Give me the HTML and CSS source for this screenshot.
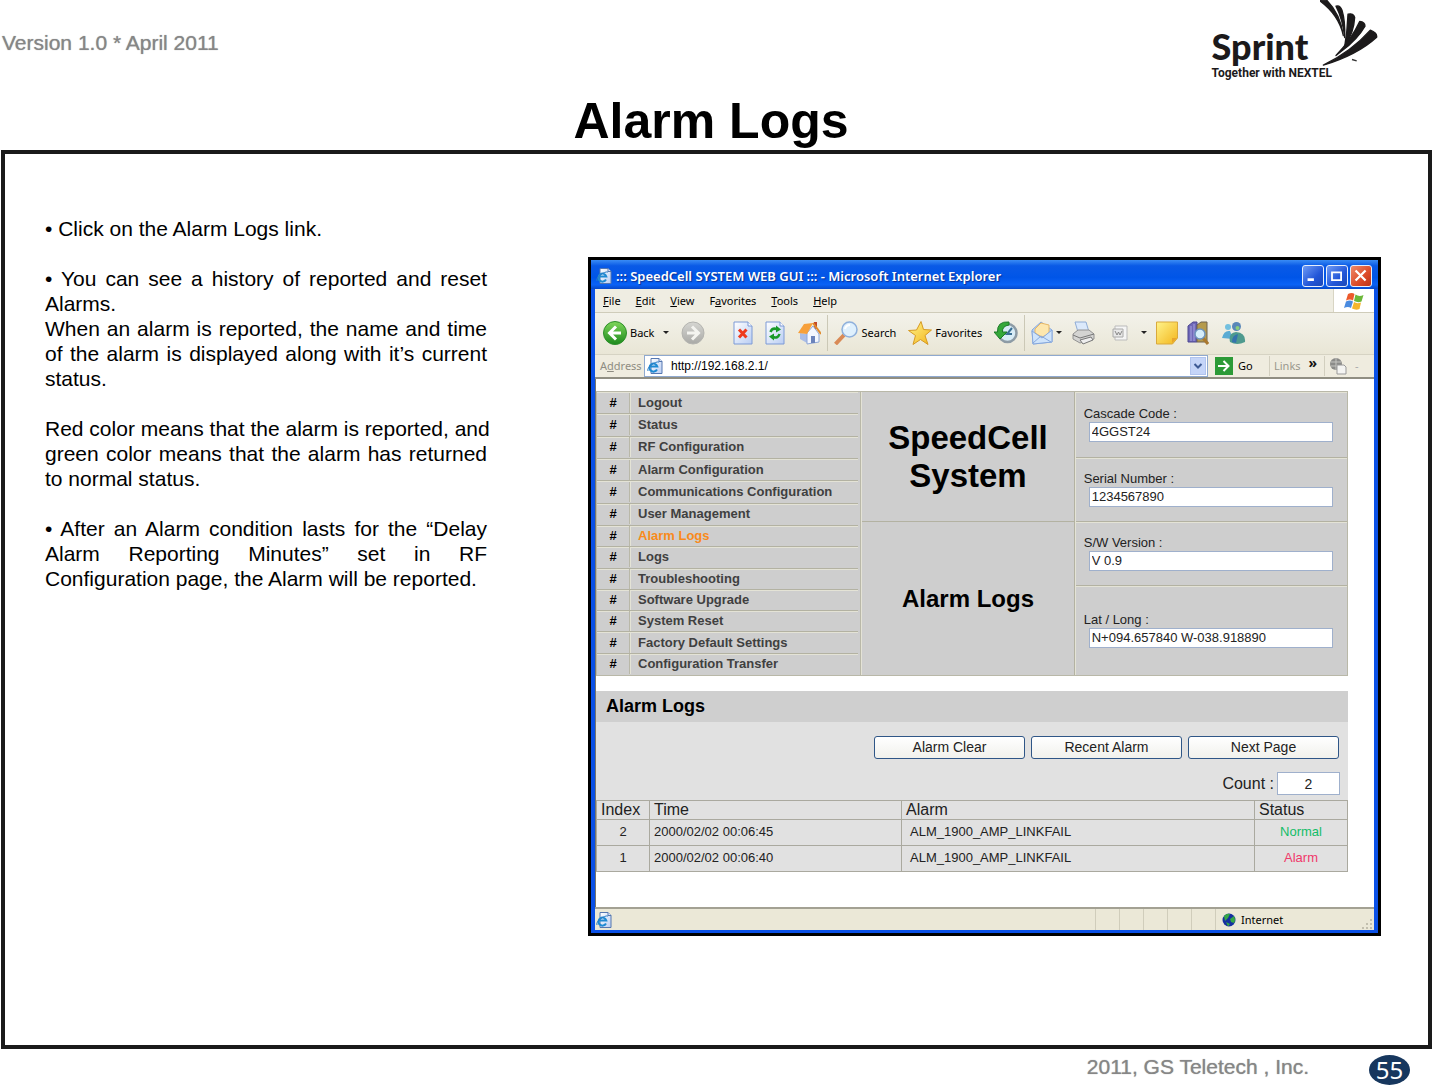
FILE: index.html
```html
<!DOCTYPE html>
<html lang="en">
<head>
<meta charset="utf-8">
<meta name="viewport" content="width=device-width, initial-scale=1">
<title>Alarm Logs</title>
<link rel="stylesheet" href="styles.css">
</head>
<body>
<svg class="defs" aria-hidden="true">
  <defs>
    <linearGradient id="g-green" x1="0" y1="0" x2="0" y2="1"><stop offset="0" stop-color="#7fd65a"/><stop offset="1" stop-color="#1d8a1d"/></linearGradient>
    <linearGradient id="g-grey" x1="0" y1="0" x2="0" y2="1"><stop offset="0" stop-color="#d6d6d2"/><stop offset="1" stop-color="#a9a9a6"/></linearGradient>
    <linearGradient id="g-page" x1="0" y1="0" x2="1" y2="1"><stop offset="0" stop-color="#fff"/><stop offset="1" stop-color="#b9cdf3"/></linearGradient>
    <linearGradient id="g-gold" x1="0" y1="0" x2="1" y2="1"><stop offset="0" stop-color="#fff38a"/><stop offset="1" stop-color="#f3b61c"/></linearGradient>
    <symbol id="ie" viewBox="0 0 16 16">
      <path d="M4 .5h8l3 3v12H4z" fill="url(#g-page)" stroke="#5577b0"/>
      <path d="M12 .5v3h3" fill="#dfe8fa" stroke="#5577b0"/>
      <path d="M10 11.500a4 4 0 1 1 .3-3H3" fill="none" stroke="#1f8ad2" stroke-width="2"/>
      <path d="M1 13C-1 10 8 3 12 4" fill="none" stroke="#2a7cc4"/>
    </symbol>
  </defs>
</svg>

<div class="page">
  <header class="top">
    <p class="version">Version 1.0 * April 2011</p>
    <div class="logo">
      <div class="logo-text"><span class="brand">Sprint</span><span class="tagline">Together with NEXTEL</span></div>
      <svg class="wing" viewBox="0 0 174 200" aria-hidden="true">
        <g fill="#1c1a1b" stroke="#1c1a1b" stroke-width="4" stroke-linejoin="round">
          <path d="M2 0H20C44 24 64 62 70 106C62 70 42 34 2 4z"/>
          <path d="M48 18Q60 14 66 30Q76 62 74 112Q68 56 48 18z"/>
          <path d="M84 42Q101 38 104 52Q102 96 74 140Q82 92 84 42z"/>
          <path d="M119 64Q135 66 135 78Q112 118 66 152L48 166Q94 118 119 64z"/>
          <path d="M151 90Q172 98 170 111Q112 164 10 195Q94 154 151 90z"/>
        </g>
        <path d="M96 178l14 4" stroke="#333" stroke-width="4"/>
      </svg>
    </div>
    <h1 class="title">Alarm Logs</h1>
  </header>

  <main class="frame">
    <section class="notes">
      <p>• Click on the Alarm Logs link.</p>
      <p>• You can see a history of reported and reset Alarms.</p>
      <p class="follow">When an alarm is reported, the name and time of the alarm is displayed along with it’s current status.</p>
      <p><span class="keep">Red color means that the alarm is reported, and</span> green color means that the alarm has returned to normal status.</p>
      <p>• After an Alarm condition lasts for the “Delay Alarm Reporting Minutes” set in RF Configuration page, the Alarm will be reported.</p>
    </section>

    <section class="window">
      <div class="titlebar">
        <svg class="i16"><use href="#ie"/></svg>
        <span class="caption">::: SpeedCell SYSTEM WEB GUI ::: - Microsoft Internet Explorer</span>
        <button class="ctl" aria-label="Minimize"><svg viewBox="0 0 22 22"><path d="M5 15h7" stroke="#fff" stroke-width="3"/></svg></button>
        <button class="ctl" aria-label="Maximize"><svg viewBox="0 0 22 22"><path d="M5 7h11M5.500 6v9.500h10V6" fill="none" stroke="#fff" stroke-width="2"/></svg></button>
        <button class="ctl close" aria-label="Close"><svg viewBox="0 0 22 22"><path d="M5 5l11 11M16 5L5 16" stroke="#fff" stroke-width="2.500"/></svg></button>
      </div>

      <div class="menubar">
        <button><u>F</u>ile</button><button><u>E</u>dit</button><button><u>V</u>iew</button><button>F<u>a</u>vorites</button><button><u>T</u>ools</button><button><u>H</u>elp</button>
        <span class="flag"><svg viewBox="0 0 20 18"><path d="M4 2Q8 0 10.500 2L9 8.500Q6 6.500 2 8.500z" fill="#ec5a2c"/><path d="M11.500 2.500Q15 5 19.500 3L17.500 9.500Q14 11 10 9z" fill="#6cb83a"/><path d="M2 9.500Q6 7.500 9 9.500L7 16Q4 14 0 16z" fill="#4a8be0"/><path d="M10 10Q13 12 17 10.500L15.500 17Q12 18.500 8 16.500z" fill="#f5b52c"/></svg></span>
      </div>

      <div class="toolbar">
        <button class="tool back"><svg class="i24" viewBox="0 0 24 24"><circle cx="12" cy="12" r="11.500" fill="url(#g-green)" stroke="#2d8f2a"/><path d="M13 5.500L6.500 12l6.500 6.500M7 12h11" fill="none" stroke="#fff" stroke-width="3"/></svg><span>Back</span><i class="drop"></i></button>
        <button class="tool forward" aria-label="Forward"><svg class="i24" viewBox="0 0 24 24"><circle cx="12" cy="12" r="11" fill="url(#g-grey)" stroke="#b4b4b0"/><path d="M11 5.500l6.500 6.500-6.500 6.500M17 12H6" fill="none" stroke="#f4f4f0" stroke-width="3"/></svg></button>
        <button class="tool" aria-label="Stop"><svg class="i20" viewBox="0 0 20 24"><path d="M1 1h14l4 4v18H1z" fill="url(#g-page)" stroke="#7d9ad6"/><path d="M15 1v4h4" fill="#fff" stroke="#7d9ad6"/><path d="M6 8.500l7.500 8M13.500 8.500L6 16.500" stroke="#ee3a1e" stroke-width="3"/></svg></button>
        <button class="tool" aria-label="Refresh"><svg class="i20" viewBox="0 0 20 24"><path d="M1 1h14l4 4v18H1z" fill="url(#g-page)" stroke="#7d9ad6"/><path d="M15 1v4h4" fill="#fff" stroke="#7d9ad6"/><path d="M5.500 11Q7 6.500 12 8M14.500 13Q13 18 7.500 16" fill="none" stroke="#189a28" stroke-width="2.500"/><path d="M11 4.500l5 4-5 3zM9 19.500l-5-4 5-3z" fill="#189a28"/></svg></button>
        <button class="tool" aria-label="Home"><svg class="i24" viewBox="0 0 24 24"><path d="M17 1h3v7h-3z" fill="#c2482a"/><path d="M3 12l7 1v9l-7-4z" fill="#a9bce6"/><path d="M10 12l6-7 6 8v8l-12 2z" fill="#f4f7ff" stroke="#8ea6d6"/><path d="M14 15h4v7h-4z" fill="#6b83bb"/><path d="M1 12L7 3l9-1-6 11z" fill="#f7a03a"/><path d="M16 2l8 11" stroke="#e08a2c" stroke-width="2"/></svg></button>
        <span class="rule"></span>
        <button class="tool"><svg class="i24" viewBox="0 0 24 24"><path d="M1.500 23L10 14" stroke="#d98a56" stroke-width="4"/><circle cx="15.500" cy="8.500" r="7.500" fill="#dff0fd" stroke="#8fb0dc" stroke-width="1.500"/><path d="M11 8q1-4 5-4" stroke="#fff" stroke-width="2" fill="none"/></svg><span>Search</span></button>
        <button class="tool"><svg class="i24" viewBox="0 0 24 24"><path d="M13 .5l2.500 8 8 .5-6.500 5.500 3 9-7.500-5-7.500 5 2.500-9-7-5 8-.5z" fill="url(#g-gold)" stroke="#d69a24"/></svg><span>Favorites</span></button>
        <button class="tool" aria-label="History"><svg class="i24" viewBox="0 0 24 24"><circle cx="13.500" cy="12" r="9" fill="#d8ecf6" stroke="#8d9ba5" stroke-width="2.500"/><path d="M18 7l-5 6h5" fill="none" stroke="#3a6f94" stroke-width="2"/><path d="M15 1Q3 0 3.500 11H0l6 7 7-7H8.500Q8 5 15 4z" fill="#35a83a" stroke="#1c7a28"/></svg></button>
        <span class="rule"></span>
        <div class="toolset">
          <button class="tool" aria-label="Mail"><svg class="i22" viewBox="0 0 22 24"><path d="M1 9l9-8 11 8v12L2 23z" fill="#b7d3f7" stroke="#86a8dd"/><path d="M4 8l6-6 8 2v9l-7 3-7-4z" fill="#fde7ae" stroke="#e6b766"/><path d="M1 10l10 7 10-8v12L2 23z" fill="#cfe4fb" stroke="#86a8dd"/><path d="M2 22l8-7 10 6" fill="none" stroke="#86a8dd"/></svg><i class="drop"></i></button>
          <button class="tool" aria-label="Print"><svg class="i24" viewBox="0 0 24 24"><path d="M4 1h11l3 10H7z" fill="#dbe9fb" stroke="#8facd6"/><path d="M2 13l5-4h11l5 4v5l-14 4-7-4z" fill="#d4d4d2" stroke="#929292"/><path d="M2 14l7 3 14-4" fill="none" stroke="#777"/><path d="M9 19l11-3 2 3-10 4z" fill="#eee" stroke="#777"/></svg></button>
          <button class="tool edit" aria-label="Edit"><svg class="i16" viewBox="0 0 16 16"><path d="M3 1h12v14H3z" fill="#f5f5f5" stroke="#bbb"/><path d="M1 4h10v8H1z" fill="#e8e8e8" stroke="#aaa"/><path d="M3 6l2 4 1.500-3L8 10l2-4" fill="none" stroke="#888"/></svg><i class="drop"></i></button>
          <button class="tool" aria-label="Discuss"><svg class="i22" viewBox="0 0 22 24"><path d="M.5 1h21v16l-5 6H.5z" fill="url(#g-gold)" stroke="#d9a93c"/><path d="M21 17h-5v5z" fill="#e8a52a"/></svg></button>
          <button class="tool" aria-label="Research"><svg class="i22" viewBox="0 0 22 24"><path d="M1 5l5-4h4v20H1z" fill="#6f68b8" stroke="#4c4790"/><path d="M10 4l4-3h6v20H10z" fill="#b59a4c" stroke="#6f6350"/><path d="M4 5v15M7 3v17" stroke="#a9a4e0"/><path d="M16 17l5 6" stroke="#a9782f" stroke-width="3"/><circle cx="13" cy="13" r="5" fill="#d5edfb" stroke="#6d93bd" stroke-width="1.500"/></svg></button>
          <button class="tool messenger" aria-label="Messenger"><svg class="i24" viewBox="0 0 24 24"><circle cx="6" cy="6" r="3" fill="#73c0df"/><path d="M0 17q2-8 8-7l3 8z" fill="#5aabd3"/><circle cx="14.500" cy="5.500" r="4.500" fill="#5a87b8"/><path d="M8 21Q6 12 14 11q10 1 9 10-8 4-15 0z" fill="#4e9a8e"/><circle cx="15.500" cy="7" r="2" fill="#8ccf7a"/><path d="M10 21q0-7 6-8l-2 9z" fill="#3472ad"/></svg></button>
        </div>
      </div>

      <div class="addressbar">
        <label for="url">A<u>d</u>dress</label>
        <div class="combo"><svg class="i16"><use href="#ie"/></svg><input id="url" type="text" value="http://192.168.2.1/"><button aria-label="Show addresses"><svg viewBox="0 0 10 10"><path d="M1.500 3L5 6.500 8.500 3" fill="none" stroke="#3d5a94" stroke-width="2"/></svg></button></div>
        <button class="go"><svg class="i18" viewBox="0 0 18 18"><path d="M0 0h18v18H0z" fill="#2c9a37"/><path d="M3 9h10M8.500 4l5 5-5 5" fill="none" stroke="#fff" stroke-width="2"/></svg><span>Go</span></button>
        <div class="links"><span>Links</span><b>»</b></div>
        <div class="extra"><svg class="i18" viewBox="0 0 18 18"><circle cx="7" cy="7" r="6" fill="#8b8b89"/><path d="M2 5h10M2 9h9M7 1v12" stroke="#c4c4c0"/><path d="M8 8h7l2 2v7H8z" fill="#f4f4f2" stroke="#999"/></svg><span>-</span></div>
      </div>

      <div class="client">
        <div class="panel">
          <nav class="nav">
            <ul>
              <li><b>#</b><a href="#">Logout</a></li>
              <li><b>#</b><a href="#">Status</a></li>
              <li><b>#</b><a href="#">RF Configuration</a></li>
              <li><b>#</b><a href="#">Alarm Configuration</a></li>
              <li><b>#</b><a href="#">Communications Configuration</a></li>
              <li><b>#</b><a href="#">User Management</a></li>
            </ul>
            <ul>
              <li><b>#</b><a href="#" class="current">Alarm Logs</a></li>
              <li><b>#</b><a href="#">Logs</a></li>
              <li><b>#</b><a href="#">Troubleshooting</a></li>
              <li><b>#</b><a href="#">Software Upgrade</a></li>
              <li><b>#</b><a href="#">System Reset</a></li>
              <li><b>#</b><a href="#">Factory Default Settings</a></li>
              <li><b>#</b><a href="#">Configuration Transfer</a></li>
            </ul>
          </nav>
          <div class="names">
            <h2>SpeedCell System</h2>
            <h3>Alarm Logs</h3>
          </div>
          <div class="fields">
            <div class="field"><label for="cascade">Cascade Code :</label><input id="cascade" type="text" value="4GGST24"></div>
            <div class="field"><label for="serial">Serial Number :</label><input id="serial" type="text" value="1234567890"></div>
            <div class="field"><label for="sw">S/W Version :</label><input id="sw" type="text" value="V 0.9"></div>
            <div class="field"><label for="latlong">Lat / Long :</label><input id="latlong" type="text" value="N+094.657840 W-038.918890"></div>
          </div>
        </div>

        <div class="logs">
          <h4>Alarm Logs</h4>
          <div class="actions"><button>Alarm Clear</button><button>Recent Alarm</button><button>Next Page</button></div>
          <div class="count"><label for="count">Count :</label><input id="count" type="text" value="2"></div>
          <table>
            <colgroup><col class="c-index"><col class="c-time"><col class="c-alarm"><col class="c-status"></colgroup>
            <thead><tr><th>Index</th><th>Time</th><th>Alarm</th><th>Status</th></tr></thead>
            <tbody>
              <tr><td>2</td><td>2000/02/02 00:06:45</td><td>ALM_1900_AMP_LINKFAIL</td><td class="normal">Normal</td></tr>
              <tr><td>1</td><td>2000/02/02 00:06:40</td><td>ALM_1900_AMP_LINKFAIL</td><td class="alarm">Alarm</td></tr>
            </tbody>
          </table>
        </div>
      </div>

      <div class="statusbar">
        <svg class="i16"><use href="#ie"/></svg>
        <span class="cells"><i></i><i></i><i></i><i></i><i></i></span>
        <span class="zone"><svg class="i14" viewBox="0 0 14 14"><circle cx="7" cy="7" r="6.500" fill="#1530a0"/><path d="M2 3q3-3 6-2L6 5 3 8zM8 6l4-3q2 4 0 7L9 9zM4 9l4 2-2 2.500z" fill="#35a845"/></svg>Internet</span>
        <svg class="grip" viewBox="0 0 12 12"><path d="M9 1h2v2H9zM5 5h2v2H5zM9 5h2v2H9zM1 9h2v2H1zM5 9h2v2H5zM9 9h2v2H9z" fill="#c2bfae"/></svg>
      </div>
    </section>
  </main>

  <footer class="bottom"><p>2011, GS Teletech , Inc.</p><span class="pageno">55</span></footer>
</div>
</body>
</html>
```

FILE: styles.css
```css
* { box-sizing: border-box; }
body { margin: 0; background: #fff; color: #000; font-family: "Liberation Sans", Arial, sans-serif; }
h1, h2, h3, h4, p, ul { margin: 0; padding: 0; }
ul { list-style: none; }
button, input { font: inherit; color: inherit; margin: 0; padding: 0; border: 0; background: none; border-radius: 0; }
input { min-width: 0; }
svg { display: block; flex: none; }
.defs { position: absolute; width: 0; height: 0; }

.page { display: flex; flex-direction: column; min-height: 100vh; }

/* Slide header */
.top { display: grid; grid-template-columns: 1fr auto; grid-template-rows: 90px 60px; padding: 0 55px 0 2px; }
.version { font-size: 21px; line-height: 24px; padding-top: 31px; color: #868686; text-shadow: 0 0 1px #999; }
.logo { display: flex; }
.logo-text { display: flex; flex-direction: column; padding-top: 26px; color: #1c1a1b; }
.brand { font: 900 36px/40px Lato, sans-serif; }
.tagline { font: 700 12px/14px Roboto, sans-serif; white-space: nowrap; }
.wing { width: 58px; height: 67px; margin-left: -12px; }
.title { grid-column: 1 / 3; padding-left: 42px; text-align: center; font-size: 50px; line-height: 62px; }

.frame { flex: 1; display: grid; grid-template-columns: minmax(0, 442fr) minmax(0, 793fr); column-gap: 101px; align-items: start; margin: 0 1px; padding: 0 47px 40px 40px; border: 4px solid #1a1a1a; }
.notes { padding-top: 62px; font-size: 21px; line-height: 25px; text-align: justify; }
.notes p { margin-bottom: 25px; }
.notes .follow { margin-top: -25px; }
.keep { white-space: nowrap; }

/* Browser window */
.window { display: flex; flex-direction: column; margin-top: 103px; border: 3px solid #000; background: #0a50e6; padding: 0 4px 3px; font-family: "Noto Sans", sans-serif; font-size: 11px; }
.titlebar { display: flex; align-items: center; gap: 2px; height: 29px; margin: 0 -4px; padding: 2px 6px 0 5px; background: linear-gradient(#3a8cf5, #0a5ae6 20%, #0055e8 60%, #0a62f6 85%, #0748c8); color: #fff; }
.caption { flex: 1; padding-left: 2px; font-size: 13px; font-weight: 600; white-space: nowrap; text-shadow: 1px 1px 1px #0a2f90; }
.ctl { width: 22px; height: 22px; border: 1px solid #e6eefc; border-radius: 3px; background: linear-gradient(135deg, #6f9bf5, #2256d8 60%, #1b48b8); }
.ctl.close { background: linear-gradient(135deg, #ee8a6a, #dc4a28 60%, #bb3316); }
.ctl svg { width: 20px; height: 20px; }
.i14 { width: 14px; height: 14px; }
.i16 { width: 16px; height: 16px; }
.i18 { width: 18px; height: 18px; }
.i20 { width: 20px; height: 24px; }
.i22 { width: 22px; height: 24px; }
.i24 { width: 24px; height: 24px; }

.menubar { display: flex; align-items: center; gap: 15px; height: 24px; padding-left: 8px; background: #efede2; border-bottom: 1px solid #cfccba; }
.menubar u, .addressbar u { text-underline-offset: 1px; }
.flag { display: flex; align-items: center; justify-content: center; align-self: stretch; width: 41px; margin-left: auto; background: #fff; border-left: 1px solid #d8d5c4; }
.flag svg { width: 20px; height: 18px; }

.toolbar { display: flex; align-items: center; gap: 12px; height: 41px; padding: 0 0 2px 8px; background: linear-gradient(#f3f2ea, #e9e6d6); }
.tool { display: flex; align-items: center; gap: 3px; height: 28px; }
.toolset { display: flex; gap: 9px; }
.drop { width: 0; border: 3px solid transparent; border-top-color: #222; border-bottom-width: 0; }
.back .drop { margin-left: 6px; }
.forward { width: 40px; }
.edit { padding-left: 8px; }
.edit .drop { margin-left: 10px; }
.messenger { padding-left: 4px; }
.rule { width: 1px; height: 36px; margin: 0 -6px; background: #cbc8b6; }

.addressbar { display: flex; align-items: center; height: 25px; padding: 0 8px 1px 5px; background: #efecdf; border-top: 1px solid #d6d3c3; border-bottom: 2px solid #908e82; }
.addressbar > label { width: 44px; color: #8e8c82; }
.combo { flex: 1; display: flex; align-items: center; height: 22px; padding-left: 2px; background: #fff; border: 1px solid #8fa9cf; }
.combo input { flex: 1; padding-left: 8px; font: 12px/16px "Liberation Sans", Arial, sans-serif; }
.combo button { width: 16px; height: 18px; margin-right: 1px; background: #c5d5f8; border: 1px solid #b1c4ee; }
.combo button svg { width: 10px; height: 10px; margin: auto; }
.go { display: flex; align-items: center; gap: 5px; width: 61px; padding-left: 7px; }
.links { display: flex; align-items: center; justify-content: space-between; width: 55px; height: 20px; padding: 0 7px 0 4px; border-left: 1px solid #d2cfbf; color: #9a988d; }
.links b { color: #111; font-size: 14px; line-height: 14px; padding-bottom: 6px; }
.extra { display: flex; align-items: center; gap: 8px; width: 42px; height: 20px; padding-left: 4px; border-left: 1px solid #d2cfbf; color: #aaa; }

/* Page inside the browser */
.client { padding: 12px 26px 35px 0; background: #fff; border-left: 1px solid #77756b; font: 13px/16px "Liberation Sans", Arial, sans-serif; color: #222; }
.panel { display: grid; grid-template-columns: 265fr 214fr 273fr; height: 285px; background: #cecece; border: 1px solid #b9b8a8; }
.nav { display: grid; grid-template-rows: 134fr 149fr; font-weight: 700; border-right: 1px solid #b9b8a8; padding-right: 2px; }
.nav ul { display: grid; grid-auto-rows: 1fr; }
.nav li { display: grid; grid-template-columns: 32px 1fr; border-bottom: 1px solid #b3b2a2; box-shadow: inset 0 1px #e4e3d6; }
.nav li > * { align-self: center; }
.nav ul:last-child li:last-child { border-bottom: 0; }
.nav b { text-align: center; color: #000; }
.nav a { padding-left: 8px; border-left: 1px solid #b9b8a8; box-shadow: inset 1px 0 #e4e3d6; line-height: 20px; color: #404040; text-decoration: none; }
.nav a.current { color: #f98a1c; }
.names { display: grid; grid-template-rows: 130fr 153fr; align-items: stretch; border-left: 1px solid #e4e3d6; border-right: 1px solid #b3b2a2; text-align: center; color: #000; }
.names h2 { display: flex; align-items: center; padding: 0 20px; border-bottom: 1px solid #b3b2a2; font-size: 33px; line-height: 38px; }
.names h3 { align-self: center; font-size: 24px; line-height: 28px; }
.fields { display: grid; grid-template-rows: 66fr 64fr 64fr 89fr; border-left: 1px solid #e4e3d6; }
.field { display: flex; flex-direction: column; justify-content: center; padding: 0 14px 2px 8px; border-bottom: 1px solid #b3b2a2; box-shadow: inset 0 1px #e4e3d6; }
.field:last-child { border-bottom: 0; }
.field input { height: 20px; margin-left: 5px; padding: 0 2px; background: #fff; border: 1px solid #9fb0cc; }

.logs { margin-top: 15px; background: #e1e1e1; }
.logs h4 { padding: 0 10px; background: #cfcfcf; font-size: 18px; line-height: 31px; color: #000; }
.actions { display: flex; justify-content: flex-end; gap: 6px; padding: 14px 9px 13px; }
.actions button { width: 151px; height: 23px; background: linear-gradient(#fff, #f1f1ec); border: 1px solid #2f5687; border-radius: 3px; font-size: 14px; line-height: 17px; }
.count { display: flex; justify-content: flex-end; align-items: center; gap: 3px; padding: 0 8px 5px; font-size: 16px; }
.count input { width: 63px; height: 23px; background: #fff; border: 1px solid #9fb0cc; font-size: 14px; text-align: center; }
.logs table { width: 100%; table-layout: fixed; border-collapse: collapse; border: 1px solid #aaa99f; }
.c-index { width: 53px; }
.c-time { width: 252px; }
.c-status { width: 93px; }
.logs th { height: 19px; padding: 0 4px; border: 1px solid #aaa99f; font-size: 16px; line-height: 18px; font-weight: 400; text-align: left; }
.logs td { height: 26px; padding: 0 4px 2px; border: 1px solid #aaa99f; }
.logs td:first-child, .logs td:last-child { text-align: center; }
.logs td:nth-child(3) { padding-left: 8px; }
.logs .normal { color: #12bd68; }
.logs .alarm { color: #f0386a; }

.statusbar { display: flex; align-items: center; height: 23px; padding: 0 1px; background: #ebe8d7; border-top: 2px solid #a3a193; }
.cells { display: flex; align-self: stretch; margin-left: auto; }
.cells i { width: 24px; border-left: 1px solid #d0cdbb; }
.zone { display: flex; align-items: center; align-self: stretch; gap: 5px; width: 146px; padding-left: 6px; border-left: 1px solid #d0cdbb; }
.grip { width: 12px; height: 12px; align-self: flex-end; }

/* Slide footer */
.bottom { display: flex; justify-content: flex-end; align-items: center; gap: 60px; height: 36px; padding: 6px 23px 0 0; color: #868686; font-size: 21px; line-height: 24px; text-shadow: 0 0 1px #999; }
.bottom p { padding-bottom: 6px; }
.pageno { width: 41px; height: 30px; border-radius: 50%; background: #17375e; color: #fff; font: 24px/30px "Noto Sans", sans-serif; text-align: center; text-shadow: none; }
```
